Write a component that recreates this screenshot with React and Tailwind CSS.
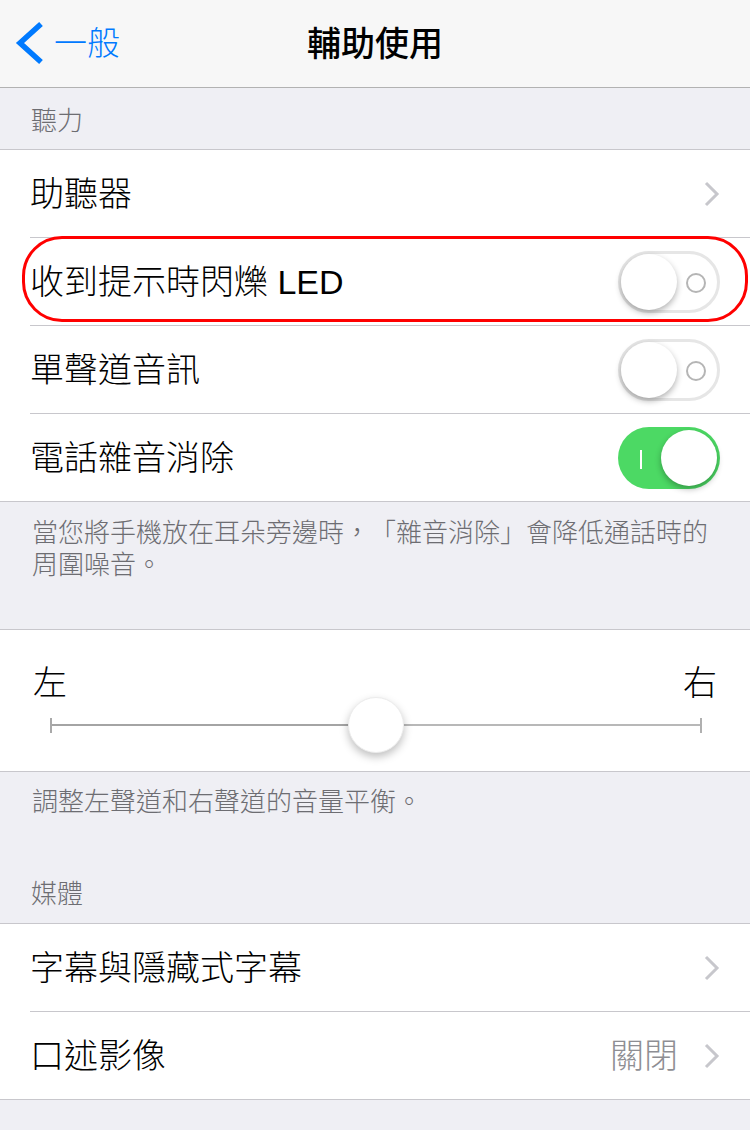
import React from "react";

const FONT = { fontFamily: '"Liberation Sans", "Noto Sans CJK TC", "Noto Sans CJK SC", sans-serif' };

function Chevron() {
  return (
    <svg width="16" height="26" viewBox="0 0 16 26" className="shrink-0">
      <polyline points="2,2 13,13 2,24" fill="none" stroke="#c7c7cc" strokeWidth="3" strokeLinejoin="miter" />
    </svg>
  );
}

function Toggle({ on }) {
  if (on) {
    return (
      <div className="relative w-[102px] h-[62px] rounded-full bg-[#4cd964] shrink-0">
        <div className="absolute left-[22px] top-[23px] w-[2px] h-[19px] bg-white" />
        <div className="absolute right-[3px] top-[3px] w-[56px] h-[56px] rounded-full bg-white shadow-[0_3px_6px_rgba(0,0,0,0.3)]" />
      </div>
    );
  }
  return (
    <div className="relative w-[102px] h-[62px] rounded-full border-[3px] border-[#e6e6e6] bg-white shrink-0">
      <div className="absolute right-[11px] top-[19px] w-[20px] h-[20px] rounded-full border-2 border-[#b5b5b5]" />
      <div className="absolute left-0 top-0 w-[56px] h-[56px] rounded-full bg-white shadow-[0_3px_6px_rgba(0,0,0,0.3)]" />
    </div>
  );
}

function Row({ label, last, children }) {
  return (
    <div className={`flex pl-[30px] ${last ? "h-[87px]" : "h-[88px]"} relative`}>
      <div className={`flex-1 flex items-center justify-between pr-[30px] ${last ? "" : "border-b border-[#c8c7cc]"}`}>
        <span className="text-[34px] leading-[40px] text-black font-light">{label}</span>
        {children}
      </div>
    </div>
  );
}

export default function App() {
  return (
    <div className="w-[750px] h-[1130px] bg-[#efeff4] overflow-hidden relative [text-spacing-trim:space-all]" style={FONT}>
      {/* Nav bar */}
      <div className="h-[88px] bg-[#f7f7f7] border-b border-[#b2b2b2] grid grid-cols-[1fr_auto_1fr] items-center">
        <div className="flex items-center pl-[14px] gap-[8px]">
          <svg width="32" height="44" viewBox="0 0 32 44" className="shrink-0 mt-[-2px]">
            <polyline points="27,3 6,22 27,41" fill="none" stroke="#007aff" strokeWidth="5.5" strokeLinejoin="miter" />
          </svg>
          <span className="text-[33px] leading-[40px] text-[#007aff] font-light">一般</span>
        </div>
        <div className="text-[34px] leading-[40px] font-medium text-black">輔助使用</div>
        <div />
      </div>

      {/* Section header */}
      <div className="h-[61px] flex items-end pb-[12px] pl-[31px] text-[26px] leading-[32px] text-[#6d6d72] font-light">聽力</div>

      <div className="bg-white border-y border-[#c8c7cc]">
        <Row label="助聽器">
          <Chevron />
        </Row>
        <Row label="收到提示時閃爍 LED">
          <Toggle on={false} />
          <div className="absolute left-[22px] top-[-2px] w-[726px] h-[86px] rounded-[40px] border-[3px] border-[#ff0000] pointer-events-none" />
        </Row>
        <Row label="單聲道音訊">
          <Toggle on={false} />
        </Row>
        <Row label="電話雜音消除" last>
          <Toggle on />
        </Row>
      </div>

      {/* Footer text */}
      <div className="h-[127px] pt-[15px] px-[32px] text-[26px] leading-[32px] text-[#6d6d72] font-light">
        當您將手機放在耳朵旁邊時，「雜音消除」會降低通話時的周圍噪音。
      </div>

      {/* Balance slider */}
      <div className="bg-white border-y border-[#c8c7cc] pt-[33px] pb-[24px]">
        <div className="flex justify-between px-[33px] text-[34px] leading-[40px] text-black font-light">
          <span>左</span>
          <span>右</span>
        </div>
        <div className="relative h-[44px] ml-[50px] mr-[48px] flex items-center">
          <div className="w-[2px] h-[15px] bg-[#a9a9a9] shrink-0" />
          <div className="flex-1 h-[2px] bg-[#a4a4a4]" />
          <div className="flex-1 h-[2px] bg-[#b8b8b8]" />
          <div className="w-[2px] h-[15px] bg-[#b0b0b0] shrink-0" />
          <div className="absolute left-1/2 top-1/2 -translate-x-1/2 -translate-y-1/2 w-[56px] h-[56px] rounded-full bg-white shadow-[0_4px_8px_rgba(0,0,0,0.25)] border border-[#ececec]" />
        </div>
      </div>

      <div className="h-[82px] pt-[14px] px-[32px] text-[26px] leading-[32px] text-[#6d6d72] font-light">
        調整左聲道和右聲道的音量平衡。
      </div>

      <div className="h-[69px] flex items-end pb-[13px] pl-[31px] text-[26px] leading-[32px] text-[#6d6d72] font-light">媒體</div>

      <div className="bg-white border-y border-[#c8c7cc]">
        <Row label="字幕與隱藏式字幕">
          <Chevron />
        </Row>
        <Row label="口述影像" last>
          <div className="flex items-center gap-[26px]">
            <span className="text-[34px] leading-[40px] text-[#8e8e93] font-light">關閉</span>
            <Chevron />
          </div>
        </Row>
      </div>
    </div>
  );
}
